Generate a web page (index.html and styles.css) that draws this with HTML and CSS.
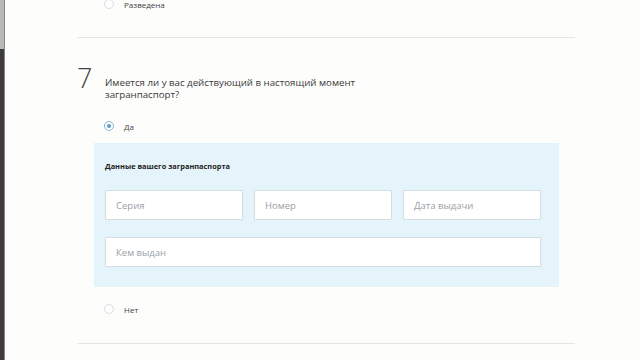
FILE: index.html
```html
<!DOCTYPE html>
<html lang="ru">
<head>
<meta charset="utf-8">
<link rel="stylesheet" href="styles.css">
</head>
<body>
<div class="edge"><div class="edge-top"></div><div class="edge-bottom"></div></div>
<main class="page">
  <div class="option option-top">
    <span class="radio"></span><span class="label">Разведена</span>
  </div>
  <hr class="divider divider-top">
  <section class="question">
    <div class="qnum">7</div>
    <div class="qtext">Имеется ли у вас действующий в настоящий момент<br>загранпаспорт?</div>
  </section>
  <div class="option option-yes">
    <span class="radio checked"></span><span class="label">Да</span>
  </div>
  <div class="panel">
    <div class="panel-title">Данные вашего загранпаспорта</div>
    <div class="row three">
      <div class="field">Серия</div>
      <div class="field">Номер</div>
      <div class="field">Дата выдачи</div>
    </div>
    <div class="row">
      <div class="field wide">Кем выдан</div>
    </div>
  </div>
  <div class="option option-no">
    <span class="radio"></span><span class="label">Нет</span>
  </div>
  <hr class="divider divider-bottom">
</main>
</body>
</html>
```

FILE: styles.css
```css
html, body {
  margin: 0;
  padding: 0;
  background: #fdfdfc;
  width: 640px;
  height: 360px;
  overflow: hidden;
  font-family: "Open Sans", "Noto Sans", sans-serif;
  color: #333;
}
body {
  display: flex;
}
.edge {
  width: 5px;
  height: 360px;
  display: flex;
  flex-direction: column;
  flex: none;
}
.edge-top {
  height: 49px;
  background: #b9b9b9;
  border-right: 1px solid #888;
}
.edge-bottom {
  flex: 1;
  background: #3f3a3d;
  border-right: 1px solid #8a8288;
}
.page {
  flex: 1;
  padding-left: 72px;
  width: 498px;
  display: flex;
  flex-direction: column;
}
.option {
  display: flex;
  align-items: center;
  height: 12px;
  padding-left: 27px;
  font-size: 8px;
  color: #444;
}
.option-top {
  margin-top: -2px;
}
.radio {
  width: 8px;
  height: 8px;
  border: 1px solid #d8dde2;
  border-radius: 50%;
  background: #fff;
  margin-right: 10px;
  box-sizing: content-box;
  position: relative;
}
.radio.checked {
  border-color: #8ab6d6;
}
.radio.checked::after {
  content: "";
  position: absolute;
  left: 2px;
  top: 2px;
  width: 4px;
  height: 4px;
  border-radius: 50%;
  background: #5a9acb;
}
.divider {
  border: 0;
  border-top: 1px solid #e6e6e6;
  margin: 0;
  width: 498px;
}
.divider-top {
  margin-top: 27px;
}
.question {
  display: flex;
  margin-top: 28px;
}
.qnum {
  width: 28px;
  font-size: 27px;
  font-weight: 300;
  line-height: 24px;
  color: #444;
  font-family: "Open Sans", sans-serif;
}
.qtext {
  margin-top: 11px;
  font-size: 9.7px;
  line-height: 12px;
  color: #3a3a3a;
}
.option-yes {
  margin-top: 19px;
}
.panel {
  margin-top: 11px;
  margin-left: 17px;
  width: 465px;
  height: 144px;
  background: #e5f4fb;
  box-sizing: border-box;
  padding: 17px 18px 0 11px;
  display: flex;
  flex-direction: column;
}
.panel-title {
  font-size: 7.4px;
  font-weight: 700;
  color: #222;
  line-height: 12px;
}
.row {
  display: flex;
  gap: 11px;
}
.row.three {
  margin-top: 18px;
}
.row.three .field {
  flex: 1;
}
.row + .row {
  margin-top: 17px;
}
.field {
  height: 30px;
  box-sizing: border-box;
  background: #fff;
  border: 1px solid #d3dde4;
  border-radius: 1px;
  padding-left: 10px;
  display: flex;
  align-items: center;
  font-size: 9.5px;
  color: #9aa0a6;
}
.field.wide {
  flex: 1;
}
.option-no {
  margin-top: 16px;
}
.divider-bottom {
  margin-top: 28px;
}
```
